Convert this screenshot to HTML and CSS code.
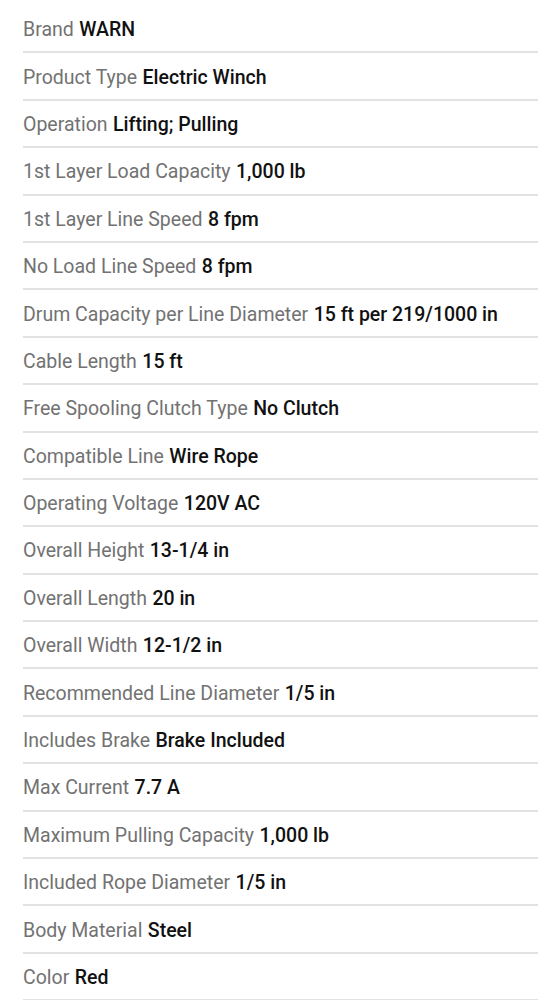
FILE: index.html
```html
<!DOCTYPE html>
<html lang="en">
<head>
<meta charset="utf-8">
<title>Specifications</title>
<link rel="stylesheet" href="styles.css">
</head>
<body>
<ul class="specs">
  <li class="spec"><span class="label">Brand</span> <span class="value">WARN</span></li>
  <li class="spec"><span class="label">Product Type</span> <span class="value">Electric Winch</span></li>
  <li class="spec"><span class="label">Operation</span> <span class="value">Lifting; Pulling</span></li>
  <li class="spec"><span class="label">1st Layer Load Capacity</span> <span class="value">1,000 lb</span></li>
  <li class="spec"><span class="label">1st Layer Line Speed</span> <span class="value">8 fpm</span></li>
  <li class="spec"><span class="label">No Load Line Speed</span> <span class="value">8 fpm</span></li>
  <li class="spec"><span class="label">Drum Capacity per Line Diameter</span> <span class="value">15 ft per 219/1000 in</span></li>
  <li class="spec"><span class="label">Cable Length</span> <span class="value">15 ft</span></li>
  <li class="spec"><span class="label">Free Spooling Clutch Type</span> <span class="value">No Clutch</span></li>
  <li class="spec"><span class="label">Compatible Line</span> <span class="value">Wire Rope</span></li>
  <li class="spec"><span class="label">Operating Voltage</span> <span class="value">120V AC</span></li>
  <li class="spec"><span class="label">Overall Height</span> <span class="value">13-1/4 in</span></li>
  <li class="spec"><span class="label">Overall Length</span> <span class="value">20 in</span></li>
  <li class="spec"><span class="label">Overall Width</span> <span class="value">12-1/2 in</span></li>
  <li class="spec"><span class="label">Recommended Line Diameter</span> <span class="value">1/5 in</span></li>
  <li class="spec"><span class="label">Includes Brake</span> <span class="value">Brake Included</span></li>
  <li class="spec"><span class="label">Max Current</span> <span class="value">7.7 A</span></li>
  <li class="spec"><span class="label">Maximum Pulling Capacity</span> <span class="value">1,000 lb</span></li>
  <li class="spec"><span class="label">Included Rope Diameter</span> <span class="value">1/5 in</span></li>
  <li class="spec"><span class="label">Body Material</span> <span class="value">Steel</span></li>
  <li class="spec"><span class="label">Color</span> <span class="value">Red</span></li>
</ul>
</body>
</html>
```

FILE: styles.css
```css
html, body {
  margin: 0;
  padding: 0;
  background: #ffffff;
}

body {
  font-family: Roboto, "Noto Sans", sans-serif;
  font-size: 19.5px;
}

.specs {
  list-style: none;
  margin: 0;
  padding: 6px 0 0 23px;
}

.spec {
  box-sizing: border-box;
  height: 47.4px;
  padding-top: 2px;
  display: flex;
  align-items: center;
  gap: 0.28em;
  border-bottom: 2px solid #e2e2e2;
  white-space: nowrap;
}

.label {
  color: #727272;
  font-weight: 400;
}

.value {
  color: #111111;
  font-weight: 500;
}
```
